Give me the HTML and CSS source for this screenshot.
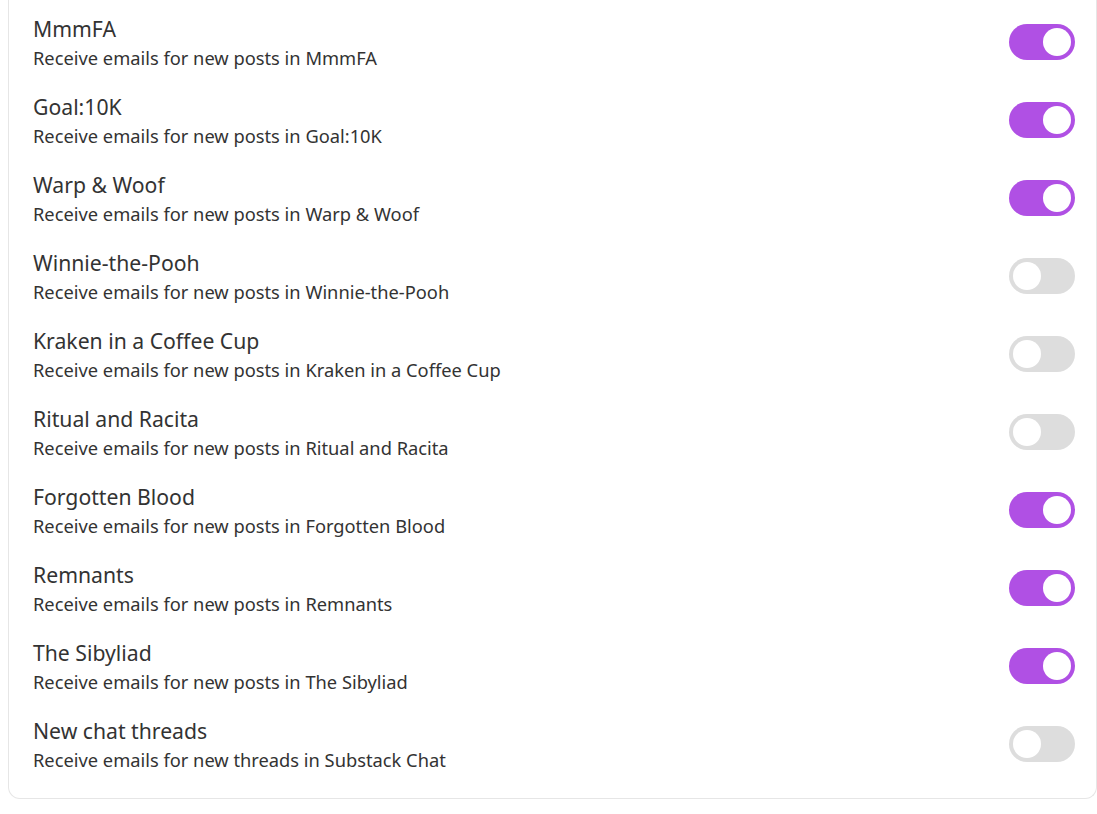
FILE: index.html
```html
<!DOCTYPE html>
<html lang="en">
<head>
  <meta charset="UTF-8" />
  <meta name="viewport" content="width=device-width, initial-scale=1.0"/>
  <title>Email notifications</title>
  <link rel="stylesheet" href="styles.css">
</head>
<body>

  <!-- Publication email settings -->
  <div class="card">
    <div class="setting">
      <div class="setting-text">
        <div class="setting-title">MmmFA</div>
        <div class="setting-desc">Receive emails for new posts in MmmFA</div>
      </div>
      <span class="toggle on"><span class="knob"></span></span>
    </div>
    <div class="setting">
      <div class="setting-text">
        <div class="setting-title">Goal:10K</div>
        <div class="setting-desc">Receive emails for new posts in Goal:10K</div>
      </div>
      <span class="toggle on"><span class="knob"></span></span>
    </div>
    <div class="setting">
      <div class="setting-text">
        <div class="setting-title">Warp &amp; Woof</div>
        <div class="setting-desc">Receive emails for new posts in Warp &amp; Woof</div>
      </div>
      <span class="toggle on"><span class="knob"></span></span>
    </div>
    <div class="setting">
      <div class="setting-text">
        <div class="setting-title">Winnie-the-Pooh</div>
        <div class="setting-desc">Receive emails for new posts in Winnie-the-Pooh</div>
      </div>
      <span class="toggle"><span class="knob"></span></span>
    </div>
    <div class="setting">
      <div class="setting-text">
        <div class="setting-title">Kraken in a Coffee Cup</div>
        <div class="setting-desc">Receive emails for new posts in Kraken in a Coffee Cup</div>
      </div>
      <span class="toggle"><span class="knob"></span></span>
    </div>
    <div class="setting">
      <div class="setting-text">
        <div class="setting-title">Ritual and Racita</div>
        <div class="setting-desc">Receive emails for new posts in Ritual and Racita</div>
      </div>
      <span class="toggle"><span class="knob"></span></span>
    </div>
    <div class="setting">
      <div class="setting-text">
        <div class="setting-title">Forgotten Blood</div>
        <div class="setting-desc">Receive emails for new posts in Forgotten Blood</div>
      </div>
      <span class="toggle on"><span class="knob"></span></span>
    </div>
    <div class="setting">
      <div class="setting-text">
        <div class="setting-title">Remnants</div>
        <div class="setting-desc">Receive emails for new posts in Remnants</div>
      </div>
      <span class="toggle on"><span class="knob"></span></span>
    </div>
    <div class="setting">
      <div class="setting-text">
        <div class="setting-title">The Sibyliad</div>
        <div class="setting-desc">Receive emails for new posts in The Sibyliad</div>
      </div>
      <span class="toggle on"><span class="knob"></span></span>
    </div>
    <div class="setting">
      <div class="setting-text">
        <div class="setting-title">New chat threads</div>
        <div class="setting-desc">Receive emails for new threads in Substack Chat</div>
      </div>
      <span class="toggle"><span class="knob"></span></span>
    </div>
  </div>

</body>
</html>
```

FILE: styles.css
```css
body {
  margin: 0;
  padding: 0;
  background: #fff;
  font-family: "Noto Sans", sans-serif;
  color: #333333;
}
.card {
  margin-left: 8px;
  border: 1px solid #e6e6e6;
  border-top: none;
  border-radius: 0 0 12px 12px;
  padding: 3px 21px 15px 24px;
}
.setting {
  display: flex;
  align-items: center;
  justify-content: space-between;
  height: 78px;
}
.setting-text {
  padding-top: 2px;
}
.setting-title {
  font-size: 21.2px;
  line-height: 30px;
}
.setting-desc {
  font-size: 18.3px;
  line-height: 28px;
}
.toggle {
  display: flex;
  align-items: center;
  width: 66px;
  height: 36px;
  padding: 0 4px;
  box-sizing: border-box;
  border-radius: 18px;
  background: #dddddd;
}
.toggle.on {
  background: #b050e4;
  justify-content: flex-end;
}
.knob {
  width: 28px;
  height: 28px;
  border-radius: 50%;
  background: #fff;
}
```
